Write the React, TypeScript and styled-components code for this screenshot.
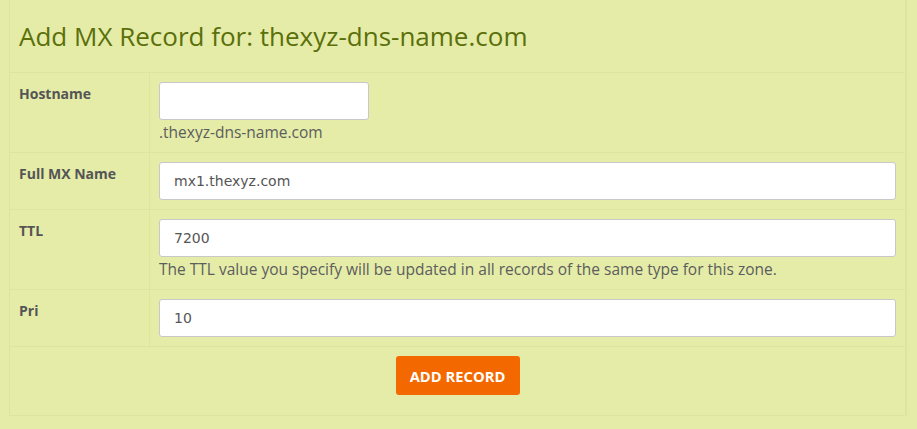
import styled, { createGlobalStyle } from "styled-components";

const GlobalStyle = createGlobalStyle`
  html, body {
    margin: 0;
    padding: 0;
    background: #e4eca8;
  }
  body {
    font-family: "Open Sans", "Liberation Sans", sans-serif;
  }
`;

const Page = styled.div`
  padding: 0 10px 0 9px;
  height: 429px;
  box-sizing: border-box;
`;

const Panel = styled.form`
  border: 1px solid #dbe59c;
  border-top: none;
  border-right-width: 2px;
`;

const Header = styled.div`
  height: 73px;
  display: flex;
  align-items: center;
  padding: 0 9px;
  border-bottom: 1px solid #dbe59c;
  box-sizing: border-box;
`;

const Title = styled.h2`
  margin: 0;
  font-family: "Open Sans", "Liberation Sans", sans-serif;
  font-weight: 400;
  font-size: 26px;
  color: #5b6f0a;
`;

const Row = styled.div`
  display: grid;
  grid-template-columns: 140px 1fr;
  border-bottom: 1px solid #dbe59c;
`;

const Label = styled.div`
  padding: 11px 9px 9px;
  border-right: 1px solid #dbe59c;
  font-weight: 700;
  font-size: 14px;
  line-height: 20px;
  color: #555;
`;

const Field = styled.div`
  padding: 9px 9px;
  display: flex;
  flex-direction: column;
`;

const Input = styled.input<{ $narrow?: boolean }>`
  box-sizing: border-box;
  height: 38px;
  width: ${(p) => (p.$narrow ? "210px" : "100%")};
  border: 1px solid #c8c8c8;
  border-radius: 3px;
  background: #fff;
  padding: 0 14px;
  font-family: "DejaVu Sans", Verdana, sans-serif;
  font-size: 14px;
  color: #555;
  outline: none;
`;

const Help = styled.span`
  margin-top: 2px;
  font-size: 15.5px;
  line-height: 21px;
  color: #5d5d5d;
`;

const Actions = styled.div`
  display: flex;
  justify-content: center;
  padding: 9px 0 20px;
`;

const Button = styled.button`
  height: 39px;
  width: 124px;
  border: none;
  border-radius: 3px;
  background: #f46800;
  color: #fff;
  font-family: "Open Sans", "Liberation Sans", sans-serif;
  font-weight: 700;
  font-size: 14.75px;
  padding: 0;
  cursor: pointer;
`;

export default function App() {
  return (
    <Page>
      <GlobalStyle />
      <Panel onSubmit={(e) => e.preventDefault()}>
        <Header>
          <Title>Add MX Record for: thexyz-dns-name.com</Title>
        </Header>
        <Row>
          <Label>Hostname</Label>
          <Field>
            <Input $narrow defaultValue="" />
            <Help>.thexyz-dns-name.com</Help>
          </Field>
        </Row>
        <Row>
          <Label>Full MX Name</Label>
          <Field>
            <Input defaultValue="mx1.thexyz.com" />
          </Field>
        </Row>
        <Row>
          <Label>TTL</Label>
          <Field>
            <Input defaultValue="7200" />
            <Help>
              The TTL value you specify will be updated in all records of the
              same type for this zone.
            </Help>
          </Field>
        </Row>
        <Row>
          <Label>Pri</Label>
          <Field>
            <Input defaultValue="10" />
          </Field>
        </Row>
        <Actions>
          <Button type="submit">ADD RECORD</Button>
        </Actions>
      </Panel>
    </Page>
  );
}
